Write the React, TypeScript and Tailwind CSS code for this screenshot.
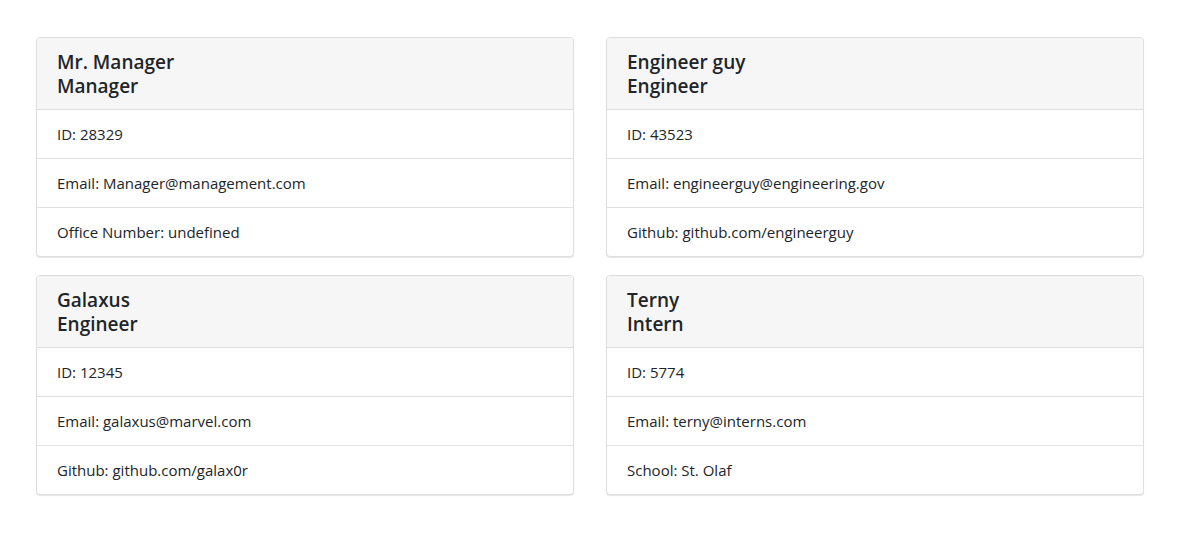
import React from "react";

type Emp = { name: string; role: string; rows: string[] };

const emps: Emp[] = [
  { name: "Mr. Manager", role: "Manager", rows: ["ID: 28329", "Email: Manager@management.com", "Office Number: undefined"] },
  { name: "Engineer guy", role: "Engineer", rows: ["ID: 43523", "Email: engineerguy@engineering.gov", "Github: github.com/engineerguy"] },
  { name: "Galaxus", role: "Engineer", rows: ["ID: 12345", "Email: galaxus@marvel.com", "Github: github.com/galax0r"] },
  { name: "Terny", role: "Intern", rows: ["ID: 5774", "Email: terny@interns.com", "School: St. Olaf"] },
];

function Card({ e }: { e: Emp }) {
  return (
    <div className="flex flex-col rounded-[4px] border border-[#dedede] bg-white shadow-[0_1px_1px_rgba(0,0,0,0.1)] overflow-hidden">
      <div className="bg-[#f6f6f6] px-5 pt-3 pb-[11px] border-b border-[#dedede]">
        <div className="text-[19px] leading-[24px] font-semibold text-[#212529]">{e.name}</div>
        <div className="text-[19px] leading-[24px] font-semibold text-[#212529]">{e.role}</div>
      </div>
      {e.rows.map((r, i) => (
        <div
          key={i}
          className={`px-5 py-3 text-[15px] leading-[24px] text-[#212529] ${i < 2 ? "border-b border-[#e2e2e2]" : ""}`}
        >
          {r}
        </div>
      ))}
    </div>
  );
}

export default function App() {
  return (
    <div
      className="min-h-[548px] bg-white pl-[36px] pt-[37px]"
      style={{ fontFamily: '"Open Sans", "Noto Sans", sans-serif' }}
    >
      <div className="grid grid-cols-[538px_538px] gap-x-[32px] gap-y-[18px]">
        {emps.map((e, i) => (
          <Card key={i} e={e} />
        ))}
      </div>
    </div>
  );
}
